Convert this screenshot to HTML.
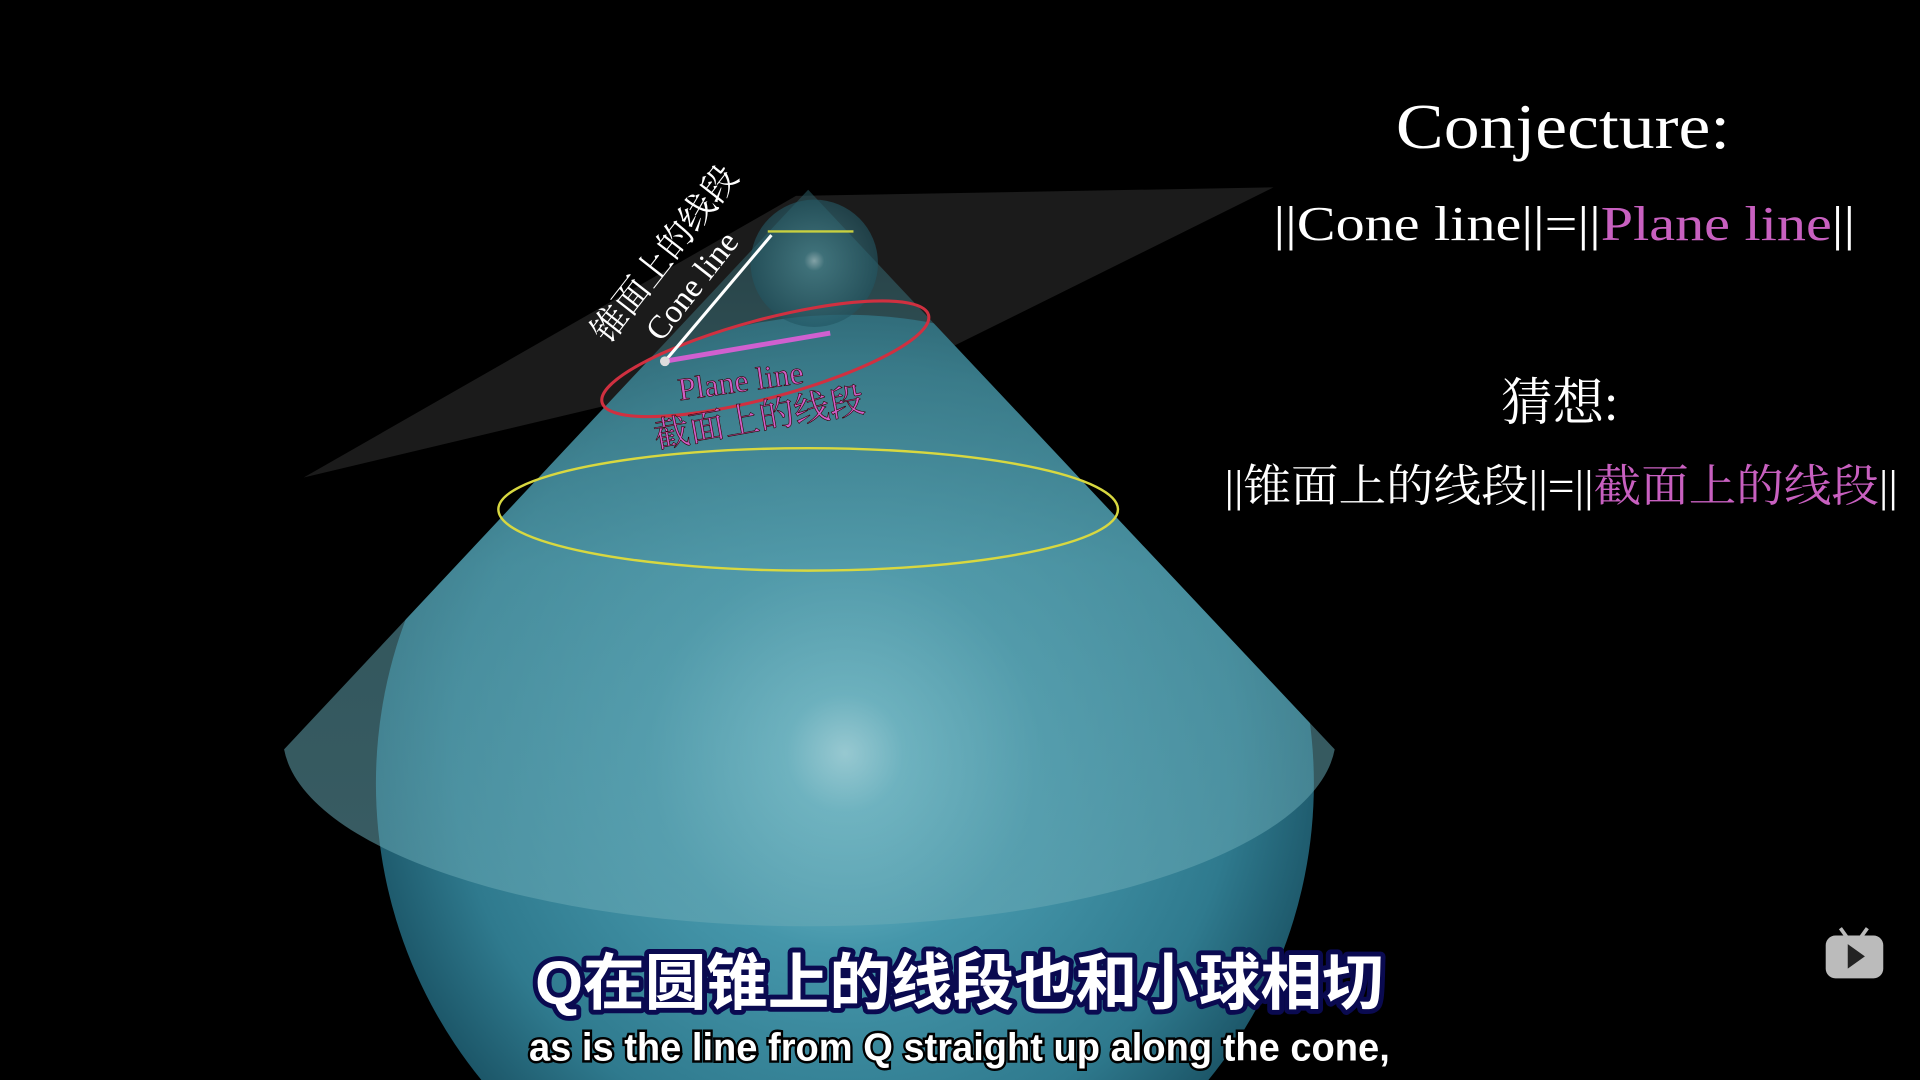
<!DOCTYPE html>
<html><head><meta charset="utf-8"><style>
html,body{margin:0;padding:0;background:#000;width:1920px;height:1080px;overflow:hidden}
svg{display:block;overflow:hidden}
.serif{font-family:"Liberation Serif","Noto Serif CJK SC",serif}
.sub{font-family:"Liberation Sans","Noto Sans CJK SC",sans-serif;font-weight:bold}
</style></head><body>
<svg width="1920" height="1080" viewBox="0 0 1568 882" xmlns="http://www.w3.org/2000/svg">
<defs>
<radialGradient id="big" cx="690" cy="615" r="400" gradientUnits="userSpaceOnUse">
<stop offset="0" stop-color="#d8f6fa"/><stop offset="0.12" stop-color="#7cc4d2"/><stop offset="0.4" stop-color="#4596aa"/><stop offset="0.8" stop-color="#2f7a8e"/><stop offset="1" stop-color="#1c5668"/></radialGradient>
<radialGradient id="small" cx="665" cy="213" r="55" gradientUnits="userSpaceOnUse">
<stop offset="0" stop-color="#bfe0e4"/><stop offset="0.15" stop-color="#4d8d98"/><stop offset="1" stop-color="#1f5360"/></radialGradient>
<linearGradient id="cone" x1="0" y1="155" x2="0" y2="770" gradientUnits="userSpaceOnUse">
<stop offset="0" stop-color="#2a5a62"/><stop offset="0.5" stop-color="#5a9ca8"/><stop offset="1" stop-color="#6aaab6"/></linearGradient>
<clipPath id="cl"><path d="M660,155 L232,612 L232,882 L1100,882 L1090,612 Z"/></clipPath>
</defs>
<rect width="1568" height="882" fill="#000"/>
<polygon points="248,390 650,160 1040,153 780,282 500,330" fill="#1b1b1b"/>
<circle cx="690" cy="640" r="383" fill="url(#big)" clip-path="url(#cl)"/>
<path d="M660,155 L232,612 A430,155 0 0 0 1090,612 Z" fill="url(#cone)" opacity="0.55"/>
<circle cx="665" cy="215" r="52" fill="url(#small)" opacity="0.6"/>
<ellipse cx="660" cy="416" rx="253" ry="50" fill="none" stroke="#d8d840" stroke-width="2"/>
<ellipse cx="625" cy="293" rx="138" ry="32" transform="rotate(-15 625 293)" fill="none" stroke="#d03040" stroke-width="2.5"/>
<line x1="627" y1="189" x2="697" y2="189" stroke="#c8d040" stroke-width="2"/>
<line x1="543" y1="295" x2="630" y2="192" stroke="#fff" stroke-width="2.5"/>
<line x1="543" y1="295" x2="678" y2="272" stroke="#d060d0" stroke-width="4"/>
<circle cx="543" cy="295" r="4" fill="#ddd"/>
<g class="serif" fill="#fff">
<text font-size="29" transform="translate(497,282) rotate(-52)">锥面上的线段</text>
<text font-size="27" transform="translate(540,280) rotate(-52)">Cone line</text>
</g>
<g class="serif" fill="#d060c8" stroke="#300" stroke-width="0.5">
<text font-size="26" transform="translate(555,327) rotate(-8)">Plane line</text>
<text font-size="29" transform="translate(536,366) rotate(-10)">截面上的线段</text>
</g>
<g class="serif" fill="#fff">
<text x="1140" y="121" font-size="52" textLength="273" lengthAdjust="spacingAndGlyphs">Conjecture:</text>
<text x="1040" y="196" font-size="40" textLength="475" lengthAdjust="spacingAndGlyphs">||Cone line||=||<tspan fill="#c860c0">Plane line</tspan>||</text>
<text x="1226" y="343" font-size="42">猜想:</text>
<text x="1000" y="409" font-size="36" textLength="550" lengthAdjust="spacingAndGlyphs">||锥面上的线段||=||<tspan fill="#c860c0">截面上的线段</tspan>||</text>
</g>
<g class="sub">
<text x="437" y="820" font-size="50" fill="#fff" stroke="#0a0a50" stroke-width="8" paint-order="stroke" stroke-linejoin="round" textLength="693" lengthAdjust="spacingAndGlyphs">Q在圆锥上的线段也和小球相切</text>
<text x="432" y="866" font-size="32" fill="#fff" stroke="#000" stroke-width="4" paint-order="stroke" textLength="703" lengthAdjust="spacingAndGlyphs">as is the line from Q straight up along the cone,</text>
</g>
<g fill="#bbb">
<rect x="1491" y="764" width="47" height="35" rx="8"/>
<line x1="1503" y1="758" x2="1508" y2="765" stroke="#bbb" stroke-width="3"/>
<line x1="1525" y1="758" x2="1520" y2="765" stroke="#bbb" stroke-width="3"/>
<polygon points="1509,771 1509,791 1523,781" fill="#222"/>
</g>
</svg>
</body></html>
